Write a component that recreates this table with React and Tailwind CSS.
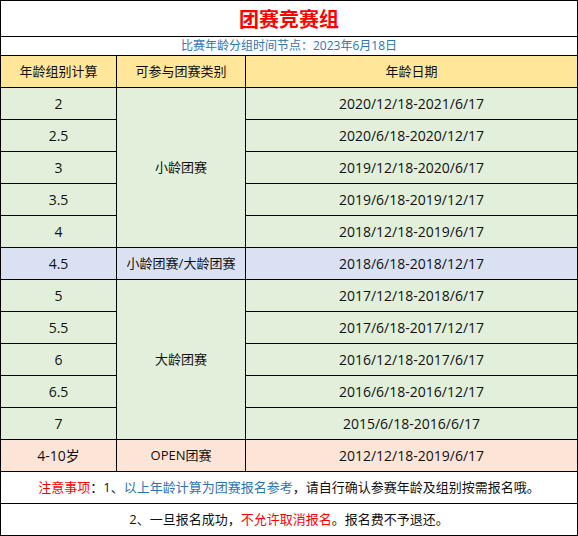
import React from "react";

const rows = [
  { age: "2", date: "2020/12/18-2021/6/17" },
  { age: "2.5", date: "2020/6/18-2020/12/17" },
  { age: "3", date: "2019/12/18-2020/6/17" },
  { age: "3.5", date: "2019/6/18-2019/12/17" },
  { age: "4", date: "2018/12/18-2019/6/17" },
];

const rowsBig = [
  { age: "5", date: "2017/12/18-2018/6/17" },
  { age: "5.5", date: "2017/6/18-2017/12/17" },
  { age: "6", date: "2016/12/18-2017/6/17" },
  { age: "6.5", date: "2016/6/18-2016/12/17" },
  { age: "7", date: "2015/6/18-2016/6/17" },
];

const cell = "border border-black text-center align-middle p-0";

function App() {
  return (
    <div
      className="bg-white w-[578px] h-[536px]"
      style={{ fontFamily: '"Open Sans", "Noto Sans CJK SC", sans-serif' }}
    >
      <table className="w-[577px] border-collapse table-fixed text-[14px] text-[#111]">
        <colgroup>
          <col className="w-[116px]" />
          <col className="w-[129px]" />
          <col className="w-[332px]" />
        </colgroup>
        <tbody>
          <tr className="h-[36px]">
            <td
              colSpan={3}
              className={`${cell} text-[20px] font-bold text-[#ff0000] leading-none`}
              style={{ fontFamily: '"Noto Sans CJK SC", serif' }}
            >
              团赛竞赛组
            </td>
          </tr>
          <tr className="h-[19px]">
            <td colSpan={3} className={`${cell} text-[12px] text-[#2e75b6] leading-none`}>
              比赛年龄分组时间节点：2023年6月18日
            </td>
          </tr>
          <tr className="h-[32px] bg-[#ffe699] text-[13px]">
            <td className={cell}>年龄组别计算</td>
            <td className={cell}>可参与团赛类别</td>
            <td className={cell}>年龄日期</td>
          </tr>
          {rows.map((r, i) => (
            <tr key={r.age} className="h-[32px] bg-[#e2efda]">
              <td className={cell}>{r.age}</td>
              {i === 0 && (
                <td rowSpan={5} className={`${cell} text-[13px]`}>
                  小龄团赛
                </td>
              )}
              <td className={cell}>{r.date}</td>
            </tr>
          ))}
          <tr className="h-[32px] bg-[#d9e1f2]">
            <td className={cell}>4.5</td>
            <td className={`${cell} text-[13px]`}>小龄团赛/大龄团赛</td>
            <td className={cell}>2018/6/18-2018/12/17</td>
          </tr>
          {rowsBig.map((r, i) => (
            <tr key={r.age} className="h-[32px] bg-[#e2efda]">
              <td className={cell}>{r.age}</td>
              {i === 0 && (
                <td rowSpan={5} className={`${cell} text-[13px]`}>
                  大龄团赛
                </td>
              )}
              <td className={cell}>{r.date}</td>
            </tr>
          ))}
          <tr className="h-[32px] bg-[#fce4d6]">
            <td className={cell}>4-10岁</td>
            <td className={`${cell} text-[13px]`}>OPEN团赛</td>
            <td className={cell}>2012/12/18-2019/6/17</td>
          </tr>
          <tr className="h-[32px]">
            <td colSpan={3} className={`${cell} text-[13px]`}>
              <span className="text-[#ff0000]">注意事项</span>：1、
              <span className="text-[#2e75b6]">以上年龄计算为团赛报名参考</span>
              ，请自行确认参赛年龄及组别按需报名哦。
            </td>
          </tr>
          <tr className="h-[32px]">
            <td colSpan={3} className={`${cell} text-[13px]`}>
              2、一旦报名成功，<span className="text-[#ff0000]">不允许取消报名</span>
              。报名费不予退还。
            </td>
          </tr>
        </tbody>
      </table>
    </div>
  );
}

export default App;
